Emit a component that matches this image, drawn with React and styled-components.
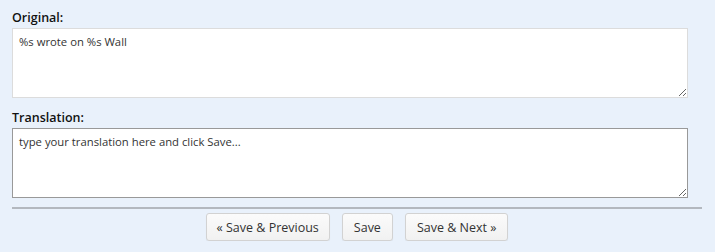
import React from 'react';
import styled, { createGlobalStyle } from 'styled-components';

const GlobalStyle = createGlobalStyle`
  html, body {
    margin: 0;
    background: #e9f1fb;
  }
  body {
    font-family: "Open Sans", "DejaVu Sans", sans-serif;
    color: #222;
  }
`;

const Page = styled.div`
  padding: 9px 13px 0 12px;
`;

const Field = styled.div`
  display: flex;
  flex-direction: column;
  margin-bottom: 11px;
`;

const Label = styled.label`
  font-size: 12.5px;
  font-weight: 600;
  line-height: 17px;
  margin-bottom: 2px;
  color: #111;
`;

const TextBox = styled.textarea`
  box-sizing: border-box;
  width: 98%;
  height: 70px;
  margin: 0;
  padding: 5px 6px;
  font-family: "Open Sans", "DejaVu Sans", sans-serif;
  font-size: 11.3px;
  line-height: 16px;
  color: #333;
  background: #fff;
  border: 1px solid ${({ $focused }) => ($focused ? '#999' : '#dcdcdc')};
  border-radius: 0;
  outline: none;
  resize: both;
`;

const Rule = styled.hr`
  margin: -2px 0 4px;
  border: 0;
  border-top: 2px solid #b3b8bf;
`;

const Actions = styled.div`
  display: flex;
  justify-content: center;
  gap: 12px;
`;

const Button = styled.button`
  box-sizing: border-box;
  height: 28px;
  padding: 0 ${({ $pad }) => $pad || 10}px;
  font-family: "Open Sans", "DejaVu Sans", sans-serif;
  font-size: 12.5px;
  color: #333;
  background: linear-gradient(#fbfbfb, #f1f1f1);
  border: 1px solid #d2d2d2;
  border-radius: 3px;
  box-shadow: 0 1px 1px rgba(0, 0, 0, 0.06);
`;

export default function App() {
  return (
    <>
      <GlobalStyle />
      <Page>
        <Field>
          <Label>Original:</Label>
          <TextBox readOnly defaultValue="%s wrote on %s Wall" />
        </Field>
        <Field>
          <Label>Translation:</Label>
          <TextBox $focused defaultValue="type your translation here and click Save..." />
        </Field>
        <Rule />
        <Actions>
          <Button $pad={10}>« Save &amp; Previous</Button>
          <Button $pad={11}>Save</Button>
          <Button $pad={11}>Save &amp; Next »</Button>
        </Actions>
      </Page>
    </>
  );
}
